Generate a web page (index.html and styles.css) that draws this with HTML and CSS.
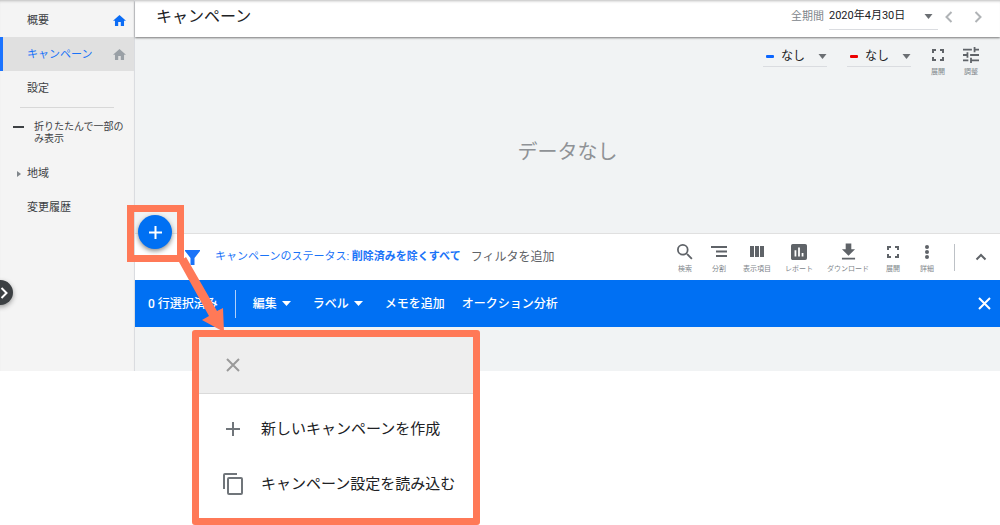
FILE: index.html
```html
<!DOCTYPE html>
<html lang="ja">
<head>
<meta charset="utf-8">
<meta name="viewport" content="width=device-width, initial-scale=1">
<title>キャンペーン</title>
<link rel="stylesheet" href="styles.css">
</head>
<body>
<div class="app">
  <nav class="sidebar">
    <a class="nav-item" href="#">概要
      <svg class="home" viewBox="2 3 20 17" width="13" height="11"><path d="M10 20v-6h4v6h5v-8h3L12 3 2 12h3v8z"/></svg>
    </a>
    <a class="nav-item nav-active" href="#" aria-current="page">キャンペーン
      <svg class="home home-muted" viewBox="2 3 20 17" width="13" height="11"><path d="M10 20v-6h4v6h5v-8h3L12 3 2 12h3v8z"/></svg>
    </a>
    <a class="nav-item" href="#">設定</a>
    <hr class="nav-rule">
    <button class="nav-fold" type="button"><span class="fold-mark"></span><span>折りたたんで一部のみ表示</span></button>
    <a class="nav-item nav-parent" href="#"><svg class="nav-caret" viewBox="0 0 4 6" width="4" height="6"><path d="M0 0l4 3-4 3z"/></svg>地域</a>
    <a class="nav-item" href="#">変更履歴</a>
  </nav>

  <main class="content">
    <header class="topbar">
      <h1 class="title">キャンペーン</h1>
      <div class="range">
        <span class="range-label">全期間</span>
        <button class="range-date" type="button">2020年4月30日
          <svg class="caret" viewBox="0 0 8 5" width="9" height="5"><path d="M0 0h8L4 5z"/></svg>
        </button>
        <button class="step" type="button" aria-label="前の期間"><svg viewBox="0 0 8 12" width="8" height="12"><path d="M6.500 1L1.500 6l5 5"/></svg></button>
        <button class="step" type="button" aria-label="次の期間"><svg viewBox="0 0 8 12" width="8" height="12"><path d="M1.500 1l5 5-5 5"/></svg></button>
      </div>
    </header>

    <section class="chart">
      <div class="chart-tools">
        <label class="metric"><span class="swatch swatch-blue"></span>
          <select aria-label="指標 1"><option>なし</option></select>
          <svg class="caret" viewBox="0 0 8 5" width="9" height="5"><path d="M0 0h8L4 5z"/></svg>
        </label>
        <label class="metric"><span class="swatch swatch-red"></span>
          <select aria-label="指標 2"><option>なし</option></select>
          <svg class="caret" viewBox="0 0 8 5" width="9" height="5"><path d="M0 0h8L4 5z"/></svg>
        </label>
        <button class="tool" type="button">
          <svg viewBox="0 0 18 18" width="18" height="18"><path d="M4 7V4h3M11 4h3v3M14 11v3h-3M7 14H4v-3" class="thin"/></svg>
          <span>展開</span>
        </button>
        <button class="tool" type="button">
          <svg viewBox="3 3 18 18" width="16" height="18"><path d="M3 17v2h6v-2H3zM3 5v2h10V5H3zm10 16v-2h8v-2h-8v-2h-2v6h2zM7 9v2H3v2h4v2h2V9H7zm14 4v-2H11v2h10zm-6-4h2V7h4V5h-4V3h-2v6z"/></svg>
          <span>調整</span>
        </button>
      </div>
      <p class="empty">データなし</p>
    </section>

    <section class="filterbar">
      <button class="filter" type="button">
        <svg class="funnel" viewBox="0 0 15 15" width="15" height="15"><path d="M0 0h15v1L9.500 8v7h-4V8L0 1z"/></svg>
        <span class="filter-text">キャンペーンのステータス: <b>削除済みを除くすべて</b></span>
      </button>
      <input class="filter-add" type="text" placeholder="フィルタを追加" aria-label="フィルタを追加">
      <div class="tools">
        <button class="tool" type="button">
          <svg viewBox="3 3 18 18" width="16" height="18"><path d="M15.500 14h-.79l-.28-.27A6.470 6.470 0 0 0 16 9.500 6.500 6.500 0 1 0 9.500 16c1.610 0 3.090-.59 4.230-1.570l.27.28v.79l5 4.990L20.490 19l-4.990-5zm-6 0a4.500 4.500 0 1 1 0-9 4.500 4.500 0 0 1 0 9z"/></svg>
          <span>検索</span>
        </button>
        <button class="tool" type="button">
          <svg viewBox="0 0 18 18" width="18" height="18"><path d="M1 4h16M6 8.500h11M6 13h11" class="thin"/></svg>
          <span>分割</span>
        </button>
        <button class="tool" type="button">
          <svg viewBox="0 0 18 18" width="18" height="18"><path d="M2 3h4v11H2zM7 3h4v11H7zM12 3h4v11h-4z"/></svg>
          <span>表示項目</span>
        </button>
        <button class="tool" type="button">
          <svg viewBox="3 3 18 18" width="16" height="18"><path d="M19 3H5a2 2 0 0 0-2 2v14c0 1.100.9 2 2 2h14a2 2 0 0 0 2-2V5a2 2 0 0 0-2-2zM9 17H7v-7h2v7zm4 0h-2V7h2v10zm4 0h-2v-4h2v4z"/></svg>
          <span>レポート</span>
        </button>
        <button class="tool" type="button">
          <svg viewBox="4 3 16 18" width="15" height="18"><path d="M19 9h-4V3H9v6H5l7 7 7-7zM5 18v2h14v-2H5z"/></svg>
          <span>ダウンロード</span>
        </button>
        <button class="tool" type="button">
          <svg viewBox="0 0 18 18" width="18" height="18"><path d="M4 7V4h3M11 4h3v3M14 11v3h-3M7 14H4v-3" class="thin"/></svg>
          <span>展開</span>
        </button>
        <button class="tool" type="button">
          <svg viewBox="0 0 18 18" width="18" height="18"><circle cx="9" cy="4" r="2"/><circle cx="9" cy="9" r="2"/><circle cx="9" cy="14" r="2"/></svg>
          <span>詳細</span>
        </button>
      </div>
      <button class="collapse" type="button" aria-label="折りたたむ"><svg viewBox="0 0 12 8" width="12" height="8"><path d="M1.500 6.500L6 2l4.500 4.500"/></svg></button>
    </section>

    <section class="selection">
      <span class="count">0 行選択済み</span>
      <button class="action" type="button">編集<svg viewBox="0 0 9 5" width="9" height="5"><path d="M0 0h9L4.500 5z"/></svg></button>
      <button class="action" type="button">ラベル<svg viewBox="0 0 9 5" width="9" height="5"><path d="M0 0h9L4.500 5z"/></svg></button>
      <button class="action action-plain" type="button">メモを追加</button>
      <button class="action" type="button">オークション分析</button>
      <button class="dismiss" type="button" aria-label="閉じる"><svg viewBox="0 0 13 13" width="13" height="13"><path d="M1 1l11 11M12 1L1 12"/></svg></button>
    </section>
    <div class="rows"></div>
  </main>
</div>

<button class="drawer" type="button" aria-label="メニューを開く"><svg viewBox="0 0 8 12" width="8" height="12"><path d="M1.500 1l5 5-5 5"/></svg></button>

<div class="callout">
  <button class="fab" type="button" aria-label="作成"><svg viewBox="0 0 13 13" width="13" height="13"><path d="M6.500 0v13M0 6.500h13"/></svg></button>
</div>

<div class="menu">
  <div class="menu-head">
    <button class="menu-close" type="button" aria-label="閉じる"><svg viewBox="0 0 14 14" width="14" height="14"><path d="M1 1l12 12M13 1L1 13" class="thin"/></svg></button>
  </div>
  <div class="menu-list">
    <button class="menu-item" type="button">
      <svg viewBox="-3 -4 20 22" width="20" height="22"><path d="M7 0v14M0 7h14" class="thin"/></svg>新しいキャンペーンを作成
    </button>
    <button class="menu-item" type="button">
      <svg viewBox="0 0 20 22" width="20" height="22"><path d="M14 1H2Q1 1 1 2v14M6 5h12q1 0 1 1v14q0 1-1 1H6q-1 0-1-1V6q0-1 1-1z" class="thin"/></svg>キャンペーン設定を読み込む
    </button>
  </div>
</div>

<svg class="arrow" viewBox="0 0 48 76" width="48" height="76"><path d="M3 5l7-5 31 54 6-3 1 24-22-12 7-4z"/></svg>
</body>
</html>
```
FILE: styles.css
```css
* { box-sizing: border-box; }

body {
  margin: 0;
  position: relative;
  min-height: 100vh;
  background: #fff;
  color: #3c4043;
  font-family: Roboto, "Noto Sans CJK JP", sans-serif;
  font-size: 12px;
  line-height: 16px;
}

button, input, select {
  margin: 0;
  padding: 0;
  border: 0;
  background: none;
  color: inherit;
  font: inherit;
}

button { cursor: pointer; }
svg { display: block; flex: none; fill: currentColor; }

.thin { fill: none; stroke: currentColor; stroke-width: 2; }

.app { display: flex; }

/* Sidebar */
.sidebar {
  flex: none;
  width: 135px;
  padding-top: 3px;
  border-right: 1px solid #dadce0;
  background: #f4f4f4;
  box-shadow: inset 0 3px 3px -2px #bbb;
  font-size: 11px;
}

.nav-item {
  display: flex;
  align-items: center;
  justify-content: space-between;
  min-height: 34px;
  padding: 1px 8px 0 27px;
  color: #3c4043;
  text-decoration: none;
}

.nav-active {
  padding-left: 24px;
  border-left: 3px solid #1a73ff;
  background: #e0e0e0;
  color: #1a73f8;
}

.home { color: #0b6cf5; }
.home-muted { color: #9aa0a6; }

.nav-rule {
  height: 1px;
  margin: 2px 20px 13px;
  border: 0;
  background: #d8d8d8;
}

.nav-fold {
  display: flex;
  gap: 10px;
  padding: 0 8px 11px 13px;
  font-size: 10px;
  line-height: 12px;
  text-align: left;
}

.fold-mark {
  flex: none;
  width: 11px;
  height: 2px;
  margin-top: 5px;
  background: #3c4043;
}

.nav-parent {
  justify-content: flex-start;
  gap: 6px;
  padding-left: 17px;
}

.nav-caret { color: #80868b; }

/* Main column */
.content {
  flex: 1;
  min-width: 0;
  background: #f1f3f4;
}

.topbar {
  display: flex;
  align-items: center;
  justify-content: space-between;
  min-height: 37px;
  padding: 0 16px 4px 21px;
  background: #fff;
  box-shadow: inset 0 3px 3px -2px #bbb, 0 1px 2px #777;
}

.title {
  margin: 0;
  color: #202124;
  font-size: 16px;
  font-weight: 400;
  line-height: 24px;
}

.range {
  display: flex;
  align-items: center;
  gap: 5px;
  font-size: 11px;
}

.range-label { color: #80868b; }

.range-date {
  display: flex;
  align-items: center;
  justify-content: space-between;
  width: 109px;
  height: 27px;
  padding-right: 5px;
  border-bottom: 1px solid #dadce0;
  color: #202124;
}

.caret { color: #6b6f73; }

.step {
  display: grid;
  place-items: center;
  width: 12px;
  height: 24px;
  color: #b0b3b6;
}

.step + .step { margin-left: 12px; }

.step path, .drawer path, .collapse path, .dismiss path, .fab path {
  fill: none;
  stroke: currentColor;
  stroke-width: 2;
}

.chart {
  min-height: 196px;
  padding: 9px 19px 0;
}

.chart-tools {
  display: flex;
  justify-content: flex-end;
  align-items: flex-start;
  gap: 13px;
}

.metric {
  display: flex;
  align-items: center;
  width: 64px;
  height: 21px;
  padding: 0 0 0 3px;
  border-bottom: 1px solid #dadce0;
  color: #202124;
}

.metric + .metric { margin-left: 7px; }
.metric + .tool { margin-left: 4px; }

.swatch {
  width: 8px;
  height: 3px;
  margin-right: 7px;
  border-radius: 1px;
}

.swatch-blue { background: #0b66ff; }
.swatch-red { background: #ec0000; }

.metric select {
  flex: 1;
  min-width: 0;
  appearance: none;
}

.empty {
  margin: 59px 0 0;
  color: #8f9296;
  font-size: 20px;
  line-height: 32px;
  text-align: center;
}

/* Icon with a small caption below */
.tool {
  display: flex;
  flex-direction: column;
  align-items: center;
  gap: 3px;
  min-width: 20px;
  color: #5f6368;
  font-size: 7px;
  line-height: 10px;
  white-space: nowrap;
}

.tool span { color: #80868b; }

/* Filter row */
.filterbar {
  display: flex;
  align-items: center;
  min-height: 47px;
  padding: 0 13px 0 50px;
  border-top: 1px solid #e0e0e0;
  background: #fff;
}

.filter {
  display: flex;
  align-items: center;
  gap: 15px;
  color: #1a73f8;
  font-size: 11px;
  white-space: nowrap;
}

.filter-add {
  flex: 1;
  min-width: 0;
  margin-left: 10px;
}

.filter-add::placeholder { color: #5f6368; opacity: 1; }

.tools {
  display: flex;
  gap: 14px;
  padding-top: 2px;
}

.collapse {
  display: flex;
  align-items: center;
  justify-content: flex-end;
  width: 33px;
  height: 27px;
  margin-left: 17px;
  border-left: 1px solid #bdc1c6;
  color: #5f6368;
}

/* Selection bar */
.selection {
  display: flex;
  align-items: center;
  min-height: 47px;
  padding: 0 9px 0 13px;
  background: #0070f3;
  color: #fff;
  font-weight: 500;
  white-space: nowrap;
}

.count {
  margin-right: 17px;
  padding: 6px 17px 6px 0;
  border-right: 1px solid #b0d0fa;
}

.action {
  display: flex;
  align-items: center;
  gap: 5px;
  margin-right: 22px;
}

.action-plain { margin-right: 17px; }
.dismiss { margin-left: auto; }
.rows { min-height: 44px; }

/* Layers over the page */
.drawer {
  position: absolute;
  top: 280px;
  left: -12px;
  display: grid;
  place-items: center end;
  width: 25px;
  height: 25px;
  padding-right: 5px;
  border-radius: 50%;
  background: #3c4043;
  box-shadow: 0 2px 5px #999;
  color: #fff;
}

.callout {
  position: absolute;
  top: 205px;
  left: 127px;
  display: grid;
  place-items: center;
  width: 57px;
  height: 57px;
  padding: 0 1px 3px 0;
  border: 7px solid #ff7957;
}

.fab {
  display: grid;
  place-items: center;
  width: 34px;
  height: 34px;
  border-radius: 50%;
  background: #0070f3;
  box-shadow: 0 2px 5px #888;
  color: #fff;
}

.menu {
  position: absolute;
  top: 330px;
  left: 192px;
  width: 288px;
  border: 7px solid #ff7957;
  border-radius: 3px;
  background: #fff;
}

.menu-head {
  display: flex;
  align-items: center;
  min-height: 57px;
  padding-left: 27px;
  border-bottom: 1px solid #dadada;
  background: #eee;
  color: #9a9a9a;
}

.menu-list { padding: 7px 0; }

.menu-item {
  display: flex;
  align-items: center;
  gap: 18px;
  width: 100%;
  min-height: 55px;
  padding-left: 24px;
  color: #202124;
  font-size: 15px;
  line-height: 24px;
  white-space: nowrap;
}

.menu-item svg { color: #70757a; }

.arrow {
  position: absolute;
  top: 257px;
  left: 176px;
  color: #ff7957;
}
```
